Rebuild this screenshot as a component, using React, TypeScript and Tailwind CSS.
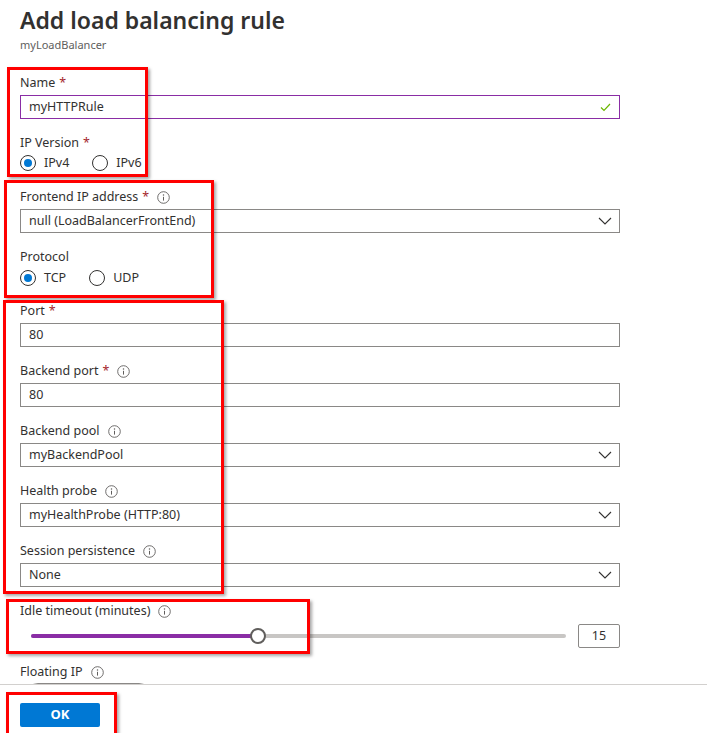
import React from "react";

const font = { fontFamily: '"Segoe UI", "Noto Sans", "Open Sans", sans-serif' };

function Info() {
  return (
    <svg width="13" height="13" viewBox="0 0 13 13" className="ml-2 shrink-0">
      <circle cx="6.5" cy="6.5" r="5.8" fill="none" stroke="#605e5c" strokeWidth="0.9" />
      <circle cx="6.5" cy="4" r="0.75" fill="#605e5c" />
      <path d="M6.5 5.8v3.8" stroke="#605e5c" strokeWidth="1" />
    </svg>
  );
}

function Label({ text, req, info }: { text: string; req?: boolean; info?: boolean }) {
  return (
    <div className="flex items-center h-4 text-[12.5px] leading-4 text-[#323130]">
      <span>{text}</span>
      {req && <span className="ml-1 text-[#a4262c]">*</span>}
      {info && <Info />}
    </div>
  );
}

function Chevron() {
  return (
    <svg width="14" height="8" viewBox="0 0 14 8">
      <path d="M1 1l6 6 6-6" fill="none" stroke="#323130" strokeWidth="1.1" />
    </svg>
  );
}

function TextBox({ value, purple, check }: { value: string; purple?: boolean; check?: boolean }) {
  return (
    <div
      className={`mt-1 h-6 flex items-center justify-between px-2 border text-[12.5px] leading-4 text-[#323130] ${
        purple ? "border-[#8a2da5]" : "border-[#8a8886]"
      }`}
    >
      <span>{value}</span>
      {check && (
        <svg width="11" height="9" viewBox="0 0 11 9">
          <path d="M1 4.5l3 3L10 1" fill="none" stroke="#6bb700" strokeWidth="1.2" />
        </svg>
      )}
    </div>
  );
}

function Select({ value }: { value: string }) {
  return (
    <div className="mt-1 h-6 flex items-center justify-between pl-2 pr-[7px] border border-[#8a8886] text-[12.5px] leading-4 text-[#323130]">
      <span>{value}</span>
      <Chevron />
    </div>
  );
}

function Radio({ label, checked }: { label: string; checked?: boolean }) {
  return (
    <div className="flex items-center h-4">
      <div className="w-4 h-4 rounded-full border border-[#323130] flex items-center justify-center">
        {checked && <div className="w-2 h-2 rounded-full bg-[#0078d4]" />}
      </div>
      <span className="ml-2 text-[12.5px] leading-4 text-[#323130]">{label}</span>
    </div>
  );
}

function Field({ children }: { children: React.ReactNode }) {
  return <div className="mb-4">{children}</div>;
}

export default function App() {
  const pct = (258 - 31) / (566 - 31);
  return (
    <div className="relative w-[707px] h-[733px] bg-white overflow-hidden" style={font}>
      <div className="h-[684px] overflow-hidden px-5 pt-[5px]">
        <h1 className="text-[23px] leading-[30px] font-semibold text-[#323130]">Add load balancing rule</h1>
        <div className="text-[11px] leading-[14px] text-[#605e5c] mt-[3px]">myLoadBalancer</div>

        <div className="mt-[23px] w-[600px]">
          <Field>
            <Label text="Name" req />
            <TextBox value="myHTTPRule" purple check />
          </Field>
          <div className="mb-[18px]">
            <Label text="IP Version" req />
            <div className="mt-1 flex gap-[23px]">
              <Radio label="IPv4" checked />
              <Radio label="IPv6" />
            </div>
          </div>
          <Field>
            <Label text="Frontend IP address" req info />
            <Select value="null (LoadBalancerFrontEnd)" />
          </Field>
          <div className="mb-[17px]">
            <Label text="Protocol" />
            <div className="mt-[5px] flex gap-[23px]">
              <Radio label="TCP" checked />
              <Radio label="UDP" />
            </div>
          </div>
          <Field>
            <Label text="Port" req />
            <TextBox value="80" />
          </Field>
          <Field>
            <Label text="Backend port" req info />
            <TextBox value="80" />
          </Field>
          <Field>
            <Label text="Backend pool" info />
            <Select value="myBackendPool" />
          </Field>
          <Field>
            <Label text="Health probe" info />
            <Select value="myHealthProbe (HTTP:80)" />
          </Field>
          <Field>
            <Label text="Session persistence" info />
            <Select value="None" />
          </Field>
          <div className="mb-4">
            <Label text="Idle timeout (minutes)" info />
            <div className="mt-[5px] flex items-center h-6">
              <div className="relative ml-[11px] w-[535px] h-1 rounded-full bg-[#c8c6c4]">
                <div
                  className="absolute left-0 top-0 h-1 rounded-full bg-[#8a2da5]"
                  style={{ width: `${pct * 100}%` }}
                />
                <div
                  className="absolute top-1/2 w-4 h-4 -translate-x-1/2 -translate-y-1/2 rounded-full bg-white border-2 border-[#605e5c]"
                  style={{ left: `${pct * 100}%` }}
                />
              </div>
              <div className="ml-auto w-[42px] h-6 border border-[#8a8886] rounded-[2px] flex items-center justify-center text-[12.5px] text-[#323130]">
                15
              </div>
            </div>
          </div>
          <div>
            <Label text="Floating IP" info />
            <div className="mt-[3px] ml-[6px] w-[125px] h-6 rounded-[12px] border border-[#8a8886]" />
          </div>
        </div>
      </div>

      <div className="border-t border-[#d2d0ce] px-5 pt-4">
        <button className="w-[80px] h-6 rounded-[2px] bg-[#0078d4] text-white text-[13px] font-bold">OK</button>
      </div>

      {/* red annotation boxes */}
      <div className="absolute left-[7px] top-[67px] w-[141px] h-[110px] border-[3px] border-[#ff0000] shadow-[2px_2px_3px_rgba(0,0,0,0.35)]" />
      <div className="absolute left-[4px] top-[180px] w-[210px] h-[118px] border-[3px] border-[#ff0000] shadow-[2px_2px_3px_rgba(0,0,0,0.35)]" />
      <div className="absolute left-[3px] top-[300px] w-[221px] h-[294px] border-[3px] border-[#ff0000] shadow-[2px_2px_3px_rgba(0,0,0,0.35)]" />
      <div className="absolute left-[6px] top-[599px] w-[304px] h-[55px] border-[3px] border-[#ff0000] shadow-[2px_2px_3px_rgba(0,0,0,0.35)]" />
      <div className="absolute left-[6px] top-[692px] w-[111px] h-[60px] border-[3px] border-[#ff0000] shadow-[2px_2px_3px_rgba(0,0,0,0.35)]" />
    </div>
  );
}
